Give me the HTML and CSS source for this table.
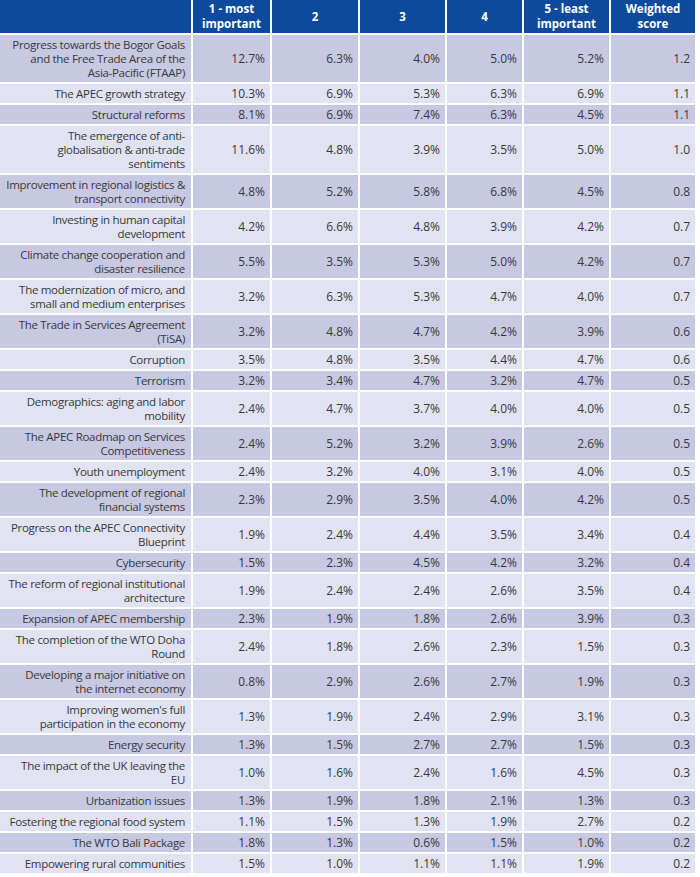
FILE: index.html
```html
<!DOCTYPE html>
<html>
<head>
<meta charset="utf-8">
<link rel="stylesheet" href="styles.css">
</head>
<body>
<table class="grid">
<colgroup>
<col class="c0"><col class="c1"><col class="c2"><col class="c3"><col class="c4"><col class="c5"><col class="c6">
</colgroup>
<thead>
<tr><th></th><th>1 - most<br>important</th><th>2</th><th>3</th><th>4</th><th>5 - least<br>important</th><th>Weighted<br>score</th></tr>
</thead>
<tbody>
<tr class="d"><td>Progress towards the Bogor Goals<br>and the Free Trade Area of the<br>Asia-Pacific (FTAAP)</td><td>12.7%</td><td>6.3%</td><td>4.0%</td><td>5.0%</td><td>5.2%</td><td>1.2</td></tr>
<tr class="l"><td>The APEC growth strategy</td><td>10.3%</td><td>6.9%</td><td>5.3%</td><td>6.3%</td><td>6.9%</td><td>1.1</td></tr>
<tr class="d"><td>Structural reforms</td><td>8.1%</td><td>6.9%</td><td>7.4%</td><td>6.3%</td><td>4.5%</td><td>1.1</td></tr>
<tr class="l"><td>The emergence of anti-<br>globalisation &amp; anti-trade<br>sentiments</td><td>11.6%</td><td>4.8%</td><td>3.9%</td><td>3.5%</td><td>5.0%</td><td>1.0</td></tr>
<tr class="d"><td>Improvement in regional logistics &amp;<br>transport connectivity</td><td>4.8%</td><td>5.2%</td><td>5.8%</td><td>6.8%</td><td>4.5%</td><td>0.8</td></tr>
<tr class="l"><td>Investing in human capital<br>development</td><td>4.2%</td><td>6.6%</td><td>4.8%</td><td>3.9%</td><td>4.2%</td><td>0.7</td></tr>
<tr class="d"><td>Climate change cooperation and<br>disaster resilience</td><td>5.5%</td><td>3.5%</td><td>5.3%</td><td>5.0%</td><td>4.2%</td><td>0.7</td></tr>
<tr class="l"><td>The modernization of micro, and<br>small and medium enterprises</td><td>3.2%</td><td>6.3%</td><td>5.3%</td><td>4.7%</td><td>4.0%</td><td>0.7</td></tr>
<tr class="d"><td>The Trade in Services Agreement<br>(TiSA)</td><td>3.2%</td><td>4.8%</td><td>4.7%</td><td>4.2%</td><td>3.9%</td><td>0.6</td></tr>
<tr class="l"><td>Corruption</td><td>3.5%</td><td>4.8%</td><td>3.5%</td><td>4.4%</td><td>4.7%</td><td>0.6</td></tr>
<tr class="d"><td>Terrorism</td><td>3.2%</td><td>3.4%</td><td>4.7%</td><td>3.2%</td><td>4.7%</td><td>0.5</td></tr>
<tr class="l"><td>Demographics: aging and labor<br>mobility</td><td>2.4%</td><td>4.7%</td><td>3.7%</td><td>4.0%</td><td>4.0%</td><td>0.5</td></tr>
<tr class="d"><td>The APEC Roadmap on Services<br>Competitiveness</td><td>2.4%</td><td>5.2%</td><td>3.2%</td><td>3.9%</td><td>2.6%</td><td>0.5</td></tr>
<tr class="l"><td>Youth unemployment</td><td>2.4%</td><td>3.2%</td><td>4.0%</td><td>3.1%</td><td>4.0%</td><td>0.5</td></tr>
<tr class="d"><td>The development of regional<br>financial systems</td><td>2.3%</td><td>2.9%</td><td>3.5%</td><td>4.0%</td><td>4.2%</td><td>0.5</td></tr>
<tr class="l"><td>Progress on the APEC Connectivity<br>Blueprint</td><td>1.9%</td><td>2.4%</td><td>4.4%</td><td>3.5%</td><td>3.4%</td><td>0.4</td></tr>
<tr class="d"><td>Cybersecurity</td><td>1.5%</td><td>2.3%</td><td>4.5%</td><td>4.2%</td><td>3.2%</td><td>0.4</td></tr>
<tr class="l"><td>The reform of regional institutional<br>architecture</td><td>1.9%</td><td>2.4%</td><td>2.4%</td><td>2.6%</td><td>3.5%</td><td>0.4</td></tr>
<tr class="d"><td>Expansion of APEC membership</td><td>2.3%</td><td>1.9%</td><td>1.8%</td><td>2.6%</td><td>3.9%</td><td>0.3</td></tr>
<tr class="l"><td>The completion of the WTO Doha<br>Round</td><td>2.4%</td><td>1.8%</td><td>2.6%</td><td>2.3%</td><td>1.5%</td><td>0.3</td></tr>
<tr class="d"><td>Developing a major initiative on<br>the internet economy</td><td>0.8%</td><td>2.9%</td><td>2.6%</td><td>2.7%</td><td>1.9%</td><td>0.3</td></tr>
<tr class="l"><td>Improving women's full<br>participation in the economy</td><td>1.3%</td><td>1.9%</td><td>2.4%</td><td>2.9%</td><td>3.1%</td><td>0.3</td></tr>
<tr class="d"><td>Energy security</td><td>1.3%</td><td>1.5%</td><td>2.7%</td><td>2.7%</td><td>1.5%</td><td>0.3</td></tr>
<tr class="l"><td>The impact of the UK leaving the<br>EU</td><td>1.0%</td><td>1.6%</td><td>2.4%</td><td>1.6%</td><td>4.5%</td><td>0.3</td></tr>
<tr class="d"><td>Urbanization issues</td><td>1.3%</td><td>1.9%</td><td>1.8%</td><td>2.1%</td><td>1.3%</td><td>0.3</td></tr>
<tr class="l"><td>Fostering the regional food system</td><td>1.1%</td><td>1.5%</td><td>1.3%</td><td>1.9%</td><td>2.7%</td><td>0.2</td></tr>
<tr class="d"><td>The WTO Bali Package</td><td>1.8%</td><td>1.3%</td><td>0.6%</td><td>1.5%</td><td>1.0%</td><td>0.2</td></tr>
<tr class="l"><td>Empowering rural communities</td><td>1.5%</td><td>1.0%</td><td>1.1%</td><td>1.1%</td><td>1.9%</td><td>0.2</td></tr>
</tbody>
</table>
</body>
</html>
```

FILE: styles.css
```css
html, body {
  margin: 0;
  padding: 0;
  background: #ffffff;
}
body {
  font-family: "Open Sans", "Noto Sans", sans-serif;
  font-size: 12px;
  color: #383838;
}
.grid {
  border-collapse: separate;
  border-spacing: 0;
  table-layout: fixed;
  width: 695px;
}
.c0 { width: 193px; }
.c1 { width: 79px; }
.c2 { width: 88px; }
.c3 { width: 87px; }
.c4 { width: 77px; }
.c5 { width: 87px; }
.c6 { width: 84px; }
.grid th,
.grid td {
  border-right: 2px solid #ffffff;
  border-bottom: 2px solid #ffffff;
  padding: 3px 5px 2px 5px;
  line-height: 14px;
  white-space: nowrap;
  vertical-align: middle;
}
.grid th:last-child,
.grid td:last-child {
  border-right: 0;
}
.grid th {
  background: #0e4a9b;
  color: #ffffff;
  font-weight: bold;
  text-align: center;
  height: 33px;
  box-sizing: border-box;
  padding: 1px 4px 2px 4px;
  line-height: 15px;
  font-size: 11.5px;
}
.grid td {
  text-align: right;
}
.grid td:first-child {
  padding-right: 6px;
  font-size: 11.5px;
  letter-spacing: -0.3px;
}
.grid tr.d td { background: #c7c9e3; }
.grid tr.l td { background: #e1e3f2; }
```
